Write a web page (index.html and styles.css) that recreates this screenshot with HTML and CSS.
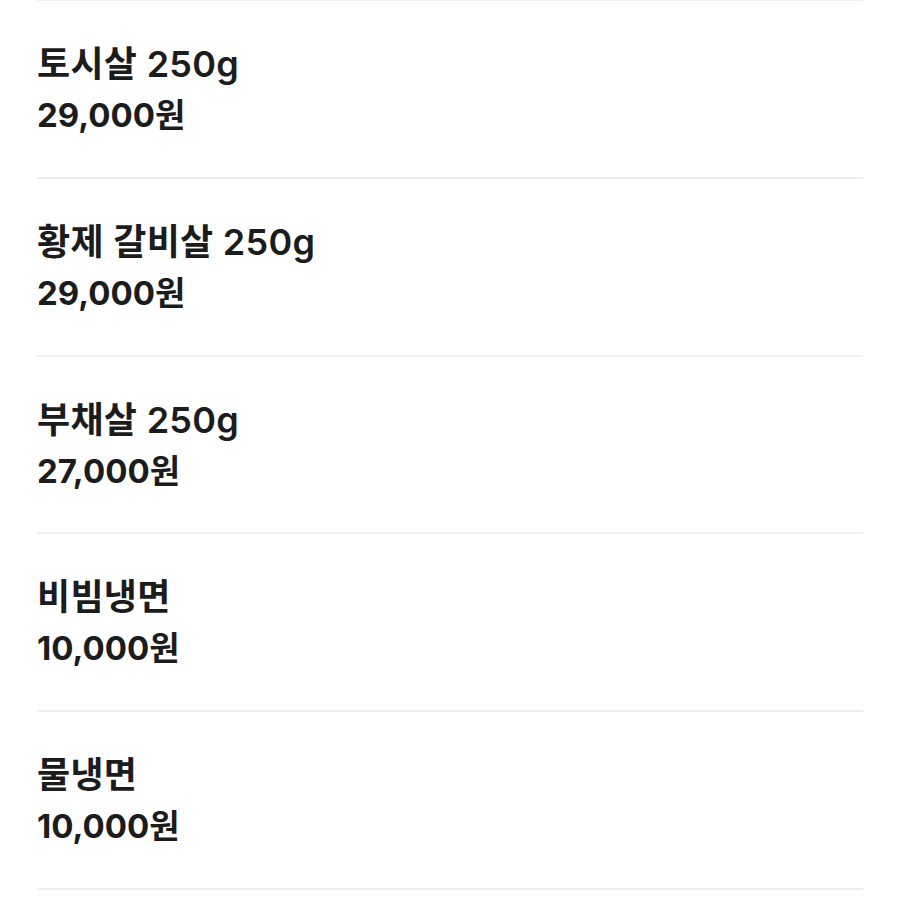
FILE: index.html
```html
<html lang="ko">

<head>
  <meta charset="UTF-8">
  <meta name="viewport" content="width=device-width, initial-scale=1.0">
  <title>메뉴</title>
  <link rel="stylesheet" href="styles.css">
</head>

<body>
  <ul class="menu">
    <li class="menu-item">
      <div class="name">토시살 250g</div>
      <div class="price">29,000원</div>
    </li>
    <li class="menu-item">
      <div class="name">황제 갈비살 250g</div>
      <div class="price">29,000원</div>
    </li>
    <li class="menu-item">
      <div class="name">부채살 250g</div>
      <div class="price">27,000원</div>
    </li>
    <li class="menu-item">
      <div class="name">비빔냉면</div>
      <div class="price">10,000원</div>
    </li>
    <li class="menu-item">
      <div class="name">물냉면</div>
      <div class="price">10,000원</div>
    </li>
  </ul>
</body>

</html>
```

FILE: styles.css
```css
body {
  font-family: Inter, "Noto Sans CJK KR", sans-serif;
  color: #1c1c1c;
  background: #fff;
  margin: 0;
}

.menu {
  list-style: none;
  margin: 0 37px;
  padding: 0;
  border-top: 1px solid #efefef;
}

.menu-item {
  box-sizing: border-box;
  height: 177.75px;
  padding-top: 41px;
  border-bottom: 2px solid #efefef;
}

.name {
  font-size: 36px;
  font-weight: 600;
  line-height: 44px;
  letter-spacing: 0.3px;
}

.price {
  font-size: 33px;
  font-weight: 700;
  line-height: 40px;
  margin-top: 9px;
}
```
